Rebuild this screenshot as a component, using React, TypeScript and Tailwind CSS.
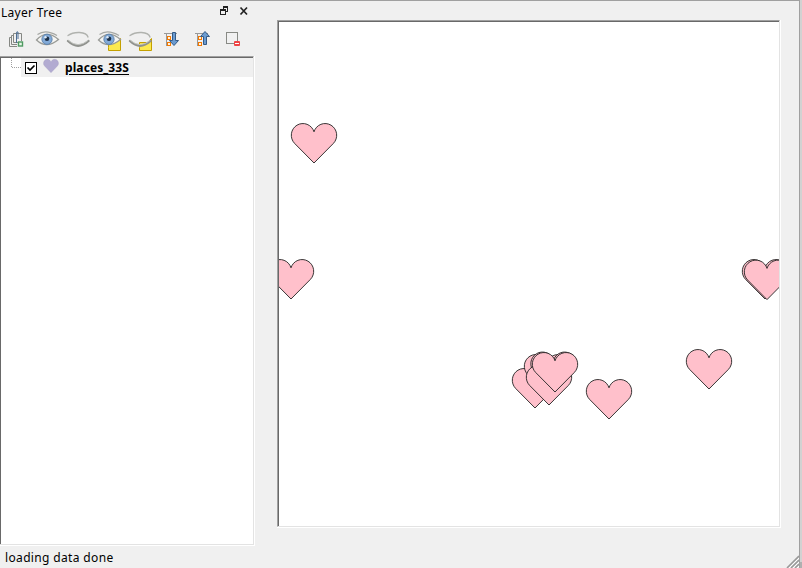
import React from "react";

const HEART =
  "M0 -31.2A11.6 11.7 0 1 0 -19.4 -19.6L0 0L19.4 -19.6A11.6 11.7 0 1 0 0 -31.2Z";

// Marker tips, in canvas coordinates, in drawing order
const places: [number, number][] = [
  [35, 141],
  [12, 277],
  [486, 277],
  [488, 277.6],
  [256, 386],
  [268, 372],
  [274.5, 369.5],
  [270, 383],
  [276, 370],
  [330, 397],
  [430, 367],
];

function Eye() {
  return (
    <g fill="none" transform="translate(.5 2)">
      <path d="M2 11Q12 0 24 10.5Q12 20.500 2 11Z" fill="#f5f5f3" stroke="#999b97" strokeWidth="1.3" />
      <path d="M3 5.500Q11 -.2 22.500 6.500" stroke="#a5a7a3" strokeWidth="1.2" />
      <circle cx="12.5" cy="10.3" r="5.1" fill="#82aad8" stroke="#5f84ae" />
      <circle cx="12.5" cy="9.8" r="2.3" fill="#1d3047" />
      <circle cx="11" cy="8.3" r="1.2" fill="#dce9f7" />
    </g>
  );
}

function ClosedEye() {
  return (
    <g fill="none" strokeLinecap="round" transform="translate(.5 2)">
      <path d="M2.500 6.500Q7 3.2 14 3.5Q21.500 4 22.500 8" stroke="#b0b2ae" strokeWidth="1.3" />
      <path d="M2.500 12Q12.5 21.500 23 12" stroke="#90928e" strokeWidth="2.3" />
      <path d="M3 11.500Q12.5 20 22.5 11.500" stroke="#c2c4c0" strokeWidth="1" />
    </g>
  );
}

function Note() {
  return <path d="M12.5 20.5V15.5H20.5L24.5 11.5V23.5H12.5Z" fill="#fce94f" stroke="#c4a000" />;
}

function Branches() {
  return (
    <g fill="none" shapeRendering="crispEdges">
      <path d="M4 5.500H17M6.500 5V17.500M6 10.500H8M6 15.500H8" stroke="#999" />
      <rect x="7.500" y="8.500" width="3" height="3" fill="#fff3e0" stroke="#f57900" />
      <rect x="7.500" y="14.500" width="3" height="3" fill="#fff3e0" stroke="#f57900" />
    </g>
  );
}

function Icon({ children, label }: { children: React.ReactNode; label: string }) {
  return (
    <button aria-label={label} className="h-6 w-[31px] shrink-0">
      <svg width="26" height="24" viewBox="0 0 26 24" className="block">{children}</svg>
    </button>
  );
}

function Toolbar() {
  return (
    <div className="flex h-[34px] items-start pt-[5px] pl-[3px]">
      <Icon label="Add group">
        <g fill="none" stroke="#858783" strokeWidth="1">
          <path d="M6.500 10.500V19.500H14M6.500 10.500H8" />
          <path d="M8.500 8.500V17.500H14M8.500 8.500H11" />
          <path d="M10.500 6.500H18.500V14M10.500 6.500V15.500H15" />
          <path d="M13.500 16V6.500Q13.500 4 15 5V12" stroke="#4d6e95" />
          <rect x="15.500" y="15" width="4" height="4" fill="#e8f5e8" stroke="#4e9a61" strokeWidth="1.4" />
        </g>
      </Icon>
      <Icon label="Show all"><Eye /></Icon>
      <Icon label="Hide all"><ClosedEye /></Icon>
      <Icon label="Show selected"><Note /><Eye /></Icon>
      <Icon label="Hide selected"><Note /><ClosedEye /></Icon>
      <Icon label="Expand all">
        <g transform="translate(2 1)">
          <Branches />
          <path d="M12.500 4.500H15.500V12.500H18.500L14 17.500L9.500 12.500H12.500Z" fill="#6b9bd0" stroke="#345a86" />
        </g>
      </Icon>
      <Icon label="Collapse all">
        <g transform="translate(2 1)">
          <Branches />
          <path d="M12.500 16.500H15.500V8.500H18.500L14 3.500L9.500 8.500H12.500Z" fill="#6b9bd0" stroke="#345a86" />
        </g>
      </Icon>
      <Icon label="Remove">
        <rect x="6.500" y="5.500" width="11" height="11" fill="#f1f1f1" stroke="#888a85" />
        <rect x="14" y="14" width="6" height="5" rx="1" fill="#ef4444" />
        <path d="M15 16.500H19" stroke="#fff" />
      </Icon>
    </div>
  );
}

export default function App() {
  return (
    <div className="flex h-[568px] w-[802px] overflow-hidden bg-[#f0f0f0] font-['Noto_Sans','Open_Sans',sans-serif] text-[12px] text-black">
      <div className="flex h-full w-[799px] shrink-0 flex-col border-t border-[#a0a0a0] pt-px">
        <main className="flex h-[544px] shrink-0">
          <aside className="flex w-[255px] shrink-0 flex-col">
            <header className="flex h-5 shrink-0 items-start justify-between pl-px">
              <h1 className="leading-[22px] tracking-[0.3px]">Layer Tree</h1>
              <svg width="36" height="20" viewBox="0 0 36 20" fill="none">
                <g shapeRendering="crispEdges" stroke="#222">
                  <path d="M4 4.500H9M4.500 4V7M8.500 4V10M7 9.500H9M1 7.500H7M1 8.500H7M1.500 7V13M6.500 7V13M1 12.500H7M4 5.500H9" />
                </g>
                <path d="M21.500 5.500L28 12.500M28 5.500L21.500 12.500" stroke="#222" strokeWidth="1.700" />
              </svg>
            </header>
            <Toolbar />
            <section className="h-[490px] border-r border-b border-white">
              <div className="h-full border-t border-r border-b border-t-[#a0a0a0] border-r-[#e3e3e3] border-b-[#e3e3e3]">
                <div className="h-full border-t border-l border-[#696969] bg-white">
                  <div className="flex h-[19px]">
                    <svg width="20" height="19" fill="none">
                      <path d="M10.500 0V9.500H20" stroke="#a0a0a0" strokeDasharray="1 1" shapeRendering="crispEdges" />
                    </svg>
                    <div className="flex flex-1 items-start bg-[#f0f0f0] pl-1">
                      <svg width="12" height="16" viewBox="0 0 12 16" className="shrink-0">
                        <rect x="0.500" y="4.500" width="11" height="11" fill="white" stroke="black" />
                        <path d="M2.500 9.500L5 12L9.500 7.500" fill="none" stroke="black" strokeWidth="1.700" />
                      </svg>
                      <svg width="16" height="18" viewBox="-8 -16 16 18" className="ml-[6px] shrink-0">
                        <path d={HEART} transform="translate(0 -1.3) scale(.33 .34)" fill="#b2abd1" stroke="#a09bc0" />
                      </svg>
                      <strong className="ml-[6px] text-[12px] leading-[20px] tracking-[0.1px] underline decoration-1 underline-offset-2">places_33S</strong>
                    </div>
                  </div>
                </div>
              </div>
            </section>
          </aside>
          <section className="mt-[18px] ml-[22px] h-[508px] w-[504px] shrink-0 border-r border-b border-white">
            <div className="h-full border border-t-[#a0a0a0] border-r-[#e3e3e3] border-b-[#e3e3e3] border-l-[#a0a0a0]">
              <div className="h-full border-t border-l border-[#696969] bg-white">
                <svg width="500" height="504" viewBox="0 0 500 504" className="block">
                  {places.map(([x, y], i) => (
                    <path key={i} d={HEART} transform={`translate(${x} ${y})`} fill="#ffc0cb" stroke="#232323" strokeWidth="0.9" />
                  ))}
                </svg>
              </div>
            </div>
          </section>
        </main>
        <footer className="flex h-[22px] items-start justify-between pl-[5px]">
          <p className="leading-[23px] tracking-[0.35px]">loading data done</p>
          <svg width="13" height="22" viewBox="0 0 13 22" fill="none">
            <path d="M1 22L13 10M5 22L13 14M9 22L13 18" stroke="#999" strokeWidth="1.600" />
            <path d="M3 22L13 12M7 22L13 16M11 22L13 20" stroke="#fff" />
          </svg>
        </footer>
      </div>
      <div className="h-full w-px bg-[#a0a0a0]" />
      <div className="flex h-full w-[2px] flex-col bg-[#d2d2d2]"><div className="mt-auto h-[6px] bg-[#b0b0b0]" /></div>
    </div>
  );
}
